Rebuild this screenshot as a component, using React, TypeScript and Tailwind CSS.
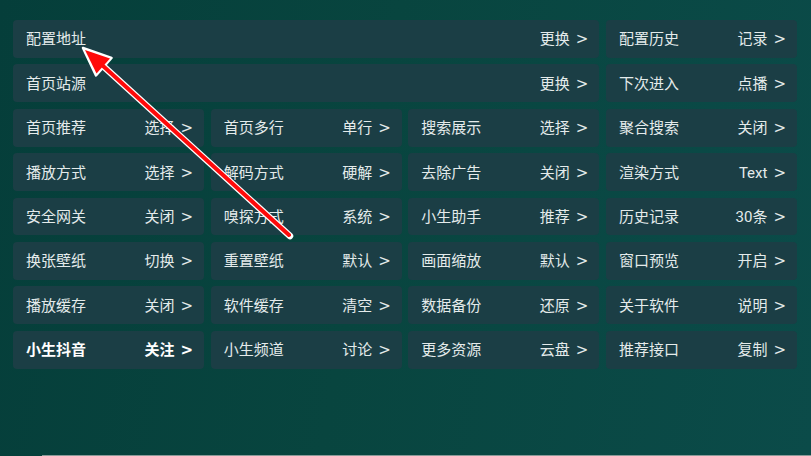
import React from "react";

type Cell = { l: string; r: string; span?: boolean; bold?: boolean };

const rows: Cell[][] = [
  [{ l: "配置地址", r: "更换", span: true }, { l: "配置历史", r: "记录" }],
  [{ l: "首页站源", r: "更换", span: true }, { l: "下次进入", r: "点播" }],
  [
    { l: "首页推荐", r: "选择" },
    { l: "首页多行", r: "单行" },
    { l: "搜索展示", r: "选择" },
    { l: "聚合搜索", r: "关闭" },
  ],
  [
    { l: "播放方式", r: "选择" },
    { l: "解码方式", r: "硬解" },
    { l: "去除广告", r: "关闭" },
    { l: "渲染方式", r: "Text" },
  ],
  [
    { l: "安全网关", r: "关闭" },
    { l: "嗅探方式", r: "系统" },
    { l: "小生助手", r: "推荐" },
    { l: "历史记录", r: "30条" },
  ],
  [
    { l: "换张壁纸", r: "切换" },
    { l: "重置壁纸", r: "默认" },
    { l: "画面缩放", r: "默认" },
    { l: "窗口预览", r: "开启" },
  ],
  [
    { l: "播放缓存", r: "关闭" },
    { l: "软件缓存", r: "清空" },
    { l: "数据备份", r: "还原" },
    { l: "关于软件", r: "说明" },
  ],
  [
    { l: "小生抖音", r: "关注", bold: true },
    { l: "小生频道", r: "讨论" },
    { l: "更多资源", r: "云盘" },
    { l: "推荐接口", r: "复制" },
  ],
];

export default function App() {
  return (
    <div
      className="relative w-[811px] h-[456px] overflow-hidden flex flex-col bg-[linear-gradient(100deg,#053e3a_0%,#08453f_45%,#0b4b49_100%)] text-[#e4ebeb] text-[15px]"
      style={{ fontFamily: '"Roboto", "Noto Sans CJK SC", sans-serif' }}
    >
      <div className="pt-[20px] pl-[13px] pr-[14px] grid grid-cols-4 gap-x-[6.5px] gap-y-[6.6px]">
        {rows.flat().map((c, i) => (
          <div
            key={i}
            className={`h-[37.8px] rounded-[4px] bg-[#1b3e45] flex items-center justify-between pt-[2px] pl-[13px] pr-[11px] leading-none ${
              c.span ? "col-span-3" : ""
            } ${c.bold ? "font-bold text-white" : ""}`}
          >
            <span>{c.l}</span>
            <span className="flex items-center">
              <span>{c.r}</span>
              <span
                className="ml-[6px] text-[15px]"
                style={{ fontFamily: '"DejaVu Sans", sans-serif' }}
              >
                &gt;
              </span>
            </span>
          </div>
        ))}
      </div>
      <div className="mt-auto ml-[42px] h-px bg-[#8a9a98]" />
      <svg
        className="absolute left-0 top-0 pointer-events-none"
        width="811"
        height="456"
        viewBox="0 0 811 456"
      >
        <line x1="290" y1="236" x2="102" y2="65" stroke="#ffffff" strokeWidth="6.5" strokeLinecap="round" />
        <polygon points="83,48 111.5,58 96,75.5" fill="#ffffff" stroke="#ffffff" strokeWidth="2.5" strokeLinejoin="round" />
        <line x1="289" y1="235" x2="102" y2="65" stroke="#ff0a0a" strokeWidth="4" strokeLinecap="round" />
        <polygon points="85,50 110,58.5 96.5,73.5" fill="#ff0a0a" />
      </svg>
    </div>
  );
}
